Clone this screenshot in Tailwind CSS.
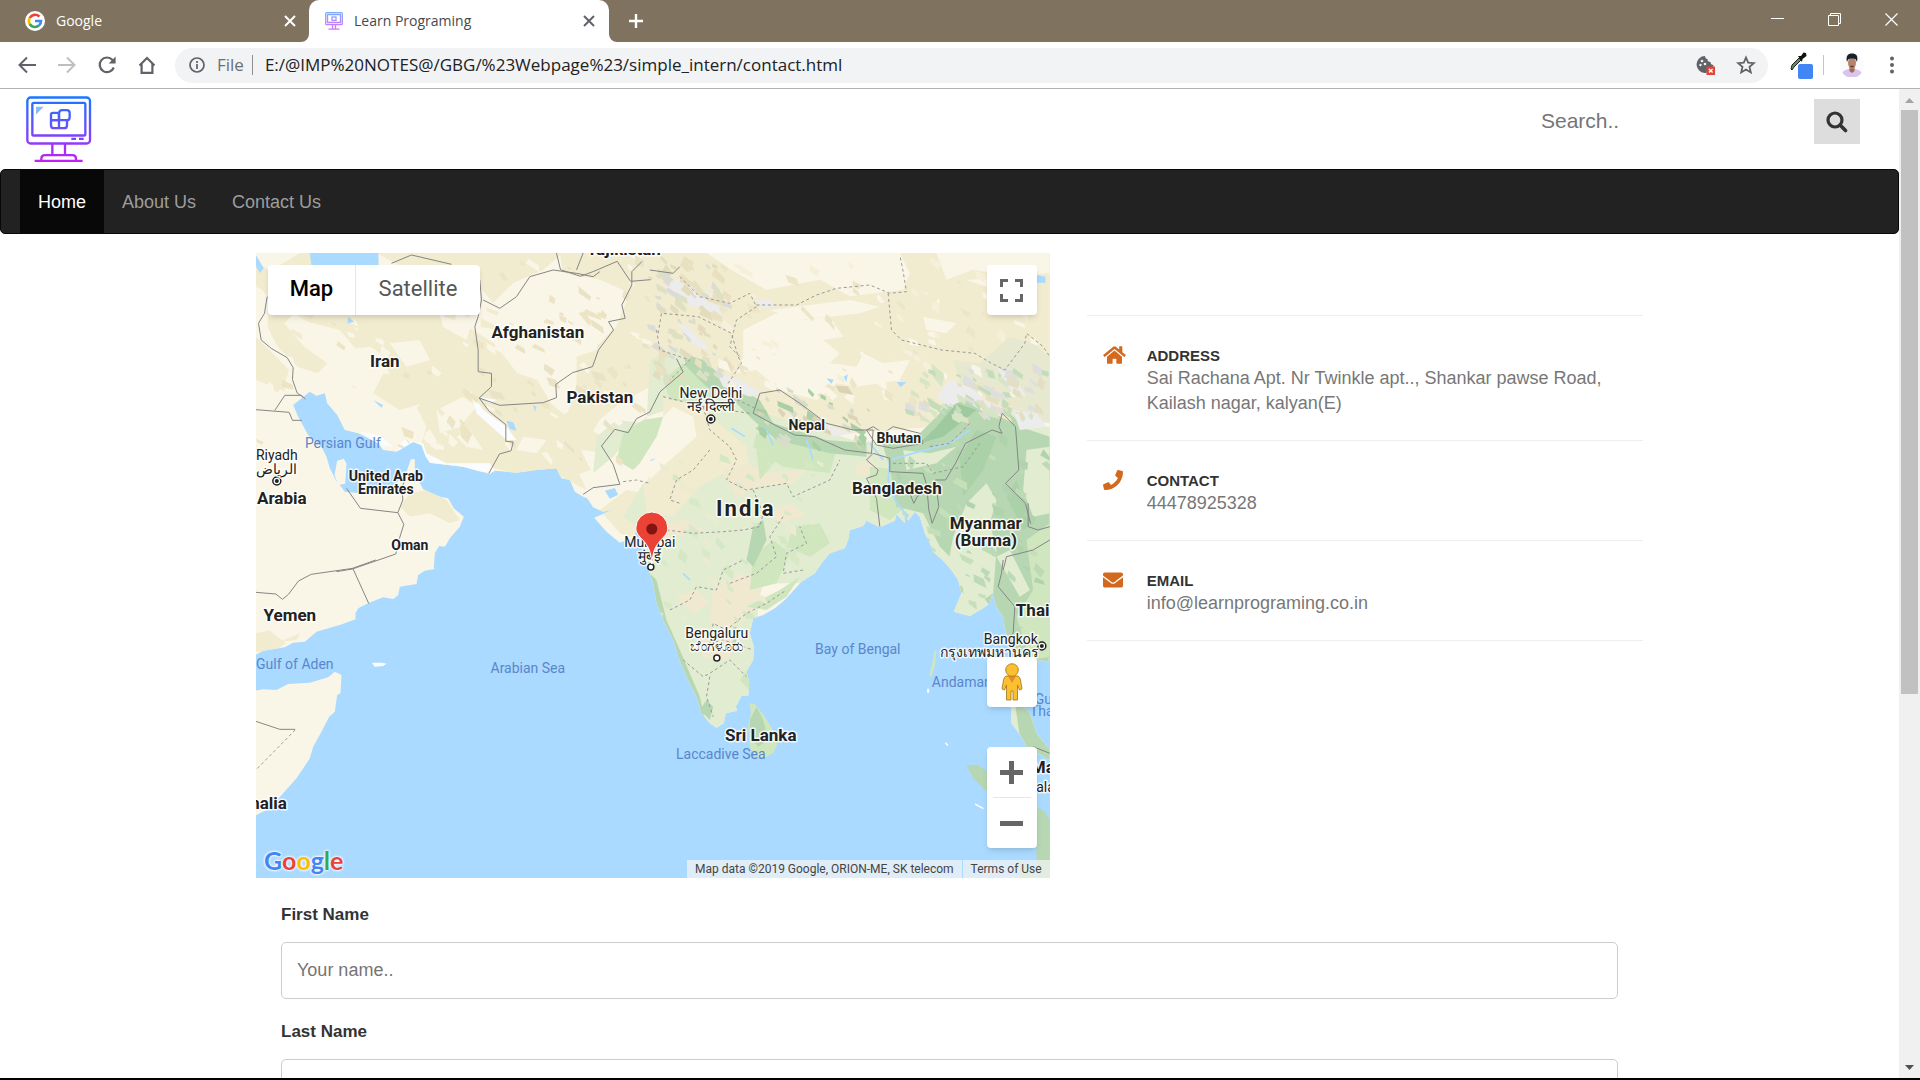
<!DOCTYPE html>
<html lang="en">
<head>
<meta charset="utf-8">
<title>Learn Programing</title>
<script src="https://cdn.jsdelivr.net/npm/@tailwindcss/browser@4"></script>
</head>
<body class="flex h-screen flex-col overflow-hidden bg-white font-['Liberation_Sans',Arial,sans-serif] text-lg text-[#333]">

<!-- Tab strip -->
<header class="flex h-[42px] shrink-0 items-center bg-[#7f735f] font-['Open_Sans','Noto_Sans',sans-serif] text-sm">
  <div class="flex w-[309px] items-center pr-[9px] pl-[25px] text-white">
    <svg class="size-5 shrink-0" viewBox="0 0 20 20"><circle cx="10" cy="10" r="10" fill="#fff"/><g fill="none" stroke-width="2.6"><path d="M14.4 5.6A6.1 6.1 0 0 0 4.7 7" stroke="#ea4335"/><path d="M4.7 7a6.2 6.2 0 0 0 0 6" stroke="#fbbc05"/><path d="M4.7 13a6.1 6.1 0 0 0 9.2 1.6" stroke="#34a853"/><path d="M13.9 14.6A6 6 0 0 0 16 10h-6" stroke="#4285f4"/></g></svg>
    <span class="ml-[11px]">Google</span>
    <button class="ml-auto grid size-5 place-items-center" aria-label="Close Google tab"><svg class="size-3" viewBox="0 0 12 12" stroke="#fff" stroke-width="2"><path d="M1 1l10 10M11 1L1 11"/></svg></button>
  </div>
  <div class="relative flex h-full w-[300px] items-center rounded-t-[10px] bg-white pr-[10px] pl-4 text-[#45494d]">
    <svg class="absolute bottom-0 -left-2 size-2" viewBox="0 0 8 8"><path d="M8 0v8H0a8 8 0 0 0 8-8z" fill="#fff"/></svg>
    <svg class="absolute -right-2 bottom-0 size-2" viewBox="0 0 8 8"><path d="M0 0v8h8a8 8 0 0 1-8-8z" fill="#fff"/></svg>
    <svg class="size-[18px] shrink-0" viewBox="0 0 18 18" fill="none" stroke-width="1.3"><defs><linearGradient id="fav" x1="0" y1="0" x2="0" y2="18" gradientUnits="userSpaceOnUse"><stop stop-color="#78aefe"/><stop offset="1" stop-color="#e26bff"/></linearGradient></defs><g stroke="url(#fav)"><rect x=".7" y=".7" width="16.6" height="12" rx="1"/><path d="M2.5 2.5h13v8h-13zM7.5 13v4M10.5 13v4M3.5 17.2h11"/><rect x="7" y="5" width="4" height="3.4"/></g></svg>
    <span class="ml-[11px]">Learn Programing</span>
    <button class="ml-auto grid size-5 place-items-center" aria-label="Close Learn Programing tab"><svg class="size-3" viewBox="0 0 12 12" stroke="#5f6368" stroke-width="2"><path d="M1 1l10 10M11 1L1 11"/></svg></button>
  </div>
  <button class="ml-4 grid size-[22px] place-items-center" aria-label="New tab"><svg class="size-4" viewBox="0 0 16 16" stroke="#fff" stroke-width="2.4"><path d="M8 1v14M1 8h14"/></svg></button>
  <div class="ml-auto flex items-center gap-11 pr-[22px] pb-1">
    <button aria-label="Minimize"><svg class="h-[13px] w-[13px]" viewBox="0 0 13 13" stroke="#fff"><path d="M0 5.5h13"/></svg></button>
    <button aria-label="Restore"><svg class="h-[13px] w-[13px]" viewBox="0 0 13 13" fill="none" stroke="#fff"><path d="M.5 2.5h10v10H.5zM2.5 2.500V.5h10v10h-2"/></svg></button>
    <button aria-label="Close"><svg class="h-[13px] w-[13px]" viewBox="0 0 13 13" stroke="#fff" stroke-width="1.200"><path d="M.5.5l12 12M12.500.5l-12 12"/></svg></button>
  </div>
</header>

<!-- Toolbar -->
<div class="flex h-[47px] shrink-0 items-center border-b border-[#b3b3b3] bg-white pr-[18px] pl-[17px] font-['Open_Sans','Noto_Sans',sans-serif] text-base">
  <div class="flex w-[158px] items-center gap-5">
    <button aria-label="Back"><svg class="size-5" viewBox="0 0 20 20" fill="none" stroke="#5f6368" stroke-width="2"><path d="M19 10H3M10 2.500L2.500 10l7.500 7.500"/></svg></button>
    <button aria-label="Forward"><svg class="size-5" viewBox="0 0 20 20" fill="none" stroke="#bdbfc1" stroke-width="2"><path d="M1 10h16M10 2.500l7.500 7.500-7.500 7.500"/></svg></button>
    <button aria-label="Reload"><svg class="size-5" viewBox="0 0 20 20" fill="none" stroke="#5f6368" stroke-width="2.200"><path d="M16.800 12.500a7.300 7.300 0 1 1-1.300-7.500l2 2"/><path d="M18.600 1.500v7h-7z" fill="#5f6368" stroke="none"/></svg></button>
    <button aria-label="Home"><svg class="size-5" viewBox="0 0 20 20" fill="none" stroke="#5f6368" stroke-width="2.200"><path d="M2.500 10.500L10 3l7.500 7.500M4.600 9v8.800h10.800V9"/></svg></button>
  </div>
  <div class="flex h-[35px] min-w-0 flex-1 items-center rounded-full bg-[#f1f3f4] pr-3 pl-[14px] text-[17px]">
    <svg class="size-4" viewBox="0 0 16 16" fill="none" stroke="#5f6368" stroke-width="1.700"><circle cx="8" cy="8" r="7"/><path d="M8 7v5M8 4v2"/></svg>
    <span class="ml-3 text-[#6b6f73]">File</span>
    <span class="ml-2 h-5 w-px bg-[#8d9094]"></span>
    <input class="ml-3 min-w-0 flex-1 bg-transparent text-[#202124] outline-none" aria-label="Address" value="E:/@IMP%20NOTES@/GBG/%23Webpage%23/simple_intern/contact.html">
    <button class="mr-5" aria-label="Cookies blocked"><svg class="size-5" viewBox="0 0 20 20"><path d="M9 1a8.500 8.500 0 1 0 8.500 9c-2 0-3-1-3-3-2 0-3.300-1-3-3C9.800 3.800 9 2.500 9 1z" fill="#5f6368"/><g fill="#f1f3f4"><circle cx="6" cy="6" r="1.300"/><circle cx="4.500" cy="10" r="1.200"/><circle cx="9" cy="9" r="1.300"/></g><path d="M10.500 11.500H19V20h-8.500z" fill="#e0453a"/><path d="M13 14l3.600 3.600M16.600 14L13 17.600" stroke="#fff" stroke-width="1.400"/></svg></button>
    <button aria-label="Bookmark this page"><svg class="size-5" viewBox="0 0 20 20" fill="none" stroke="#5f6368" stroke-width="1.800"><path d="M10 2.500l2.200 5.200 5.600.5-4.300 3.700 1.300 5.500-4.800-2.900-4.800 2.900 1.300-5.500-4.300-3.700 5.600-.5z"/></svg></button>
  </div>
  <button class="ml-5" aria-label="Colour picker"><svg class="h-[28px] w-[26px]" viewBox="0 0 26 28"><path d="M3 18l1-4 7-7 2 2-7 7-2 3z" fill="#5f8d5c" stroke="#222"/><path d="M10 5l3 0 2.500-3.500 2.500.5.500 3-4 3-.5 3z" fill="#111"/><rect x="10" y="13" width="15" height="15" rx="2" fill="#4285f4"/></svg></button>
  <span class="ml-[9px] h-5 w-px bg-[#c4c6c8]"></span>
  <svg class="ml-4 size-6" viewBox="0 0 24 24"><circle cx="12" cy="12" r="12" fill="#fbfafc"/><path d="M2.500 20c1-2.800 4-3 6-4h7c2 1 5 1.200 6 4a12 12 0 0 1-19 0z" fill="#d8c4ec"/><path d="M9.500 14h5v4L12 20l-2.500-2z" fill="#9c6b50"/><ellipse cx="12" cy="10" rx="4" ry="6" fill="#b5846a"/><path d="M7 9C5.500 3 8 .5 12 .5S18.500 2.500 17 9c-1-3-2-4-5-3.500C9 5 8 6 7 9z" fill="#172029"/><path d="M10 13.200c1-.8 3-.8 4 0-.5 1.500-3.500 1.500-4 0z" fill="#5a4035"/></svg>
  <button class="ml-[18px]" aria-label="Menu"><svg class="h-5 w-5" viewBox="0 0 20 20" fill="#5f6368"><circle cx="10" cy="3.500" r="2"/><circle cx="10" cy="10" r="2"/><circle cx="10" cy="16.500" r="2"/></svg></button>
</div>

<!-- Page viewport -->
<div class="flex min-h-0 flex-1 border-b-2 border-black">
<main class="min-w-0 flex-1 overflow-hidden">
  <div class="flex h-20 items-start justify-between pr-[39px] pl-[26px]">
    <a href="#" aria-label="Learn Programing" class="mt-[7px]"><svg class="h-[67px] w-[66px]" viewBox="0 0 198 200" fill="none" stroke-width="7"><defs><linearGradient id="lg" x1="0" y1="0" x2="0" y2="200" gradientUnits="userSpaceOnUse"><stop stop-color="#1b78ff"/><stop offset=".5" stop-color="#6a4dff"/><stop offset="1" stop-color="#c91df5"/></linearGradient></defs><g stroke="url(#lg)"><rect x="4" y="4" width="188" height="138" rx="10"/><rect x="19" y="20" width="159" height="98" rx="4"/><path d="M79 142v34M117 142v34M46 194v-6q0-11 11-11h82q11 0 11 11v6M26 194h144M136 128h14M159 128h14"/><rect x="75" y="50" width="24" height="22" rx="6"/><path d="M99 72H75v15q0 9 9 9h15zM99 72h24v15q0 9-9 9H99zM99 72V52q0-10 10-10h13q9 0 9 9v12q0 9-9 9z"/></g><path d="M30 32h23L30 55z" fill="#86bbff"/></svg></a>
    <form class="mt-[10px] flex h-[45px]">
      <input class="w-[284px] px-[11px] text-[21px] outline-none placeholder:text-[#757575]" type="text" placeholder="Search.." aria-label="Search">
      <button type="button" class="grid w-[46px] place-items-center bg-[#ddd]" aria-label="Search"><svg class="size-[22px]" viewBox="0 0 22 22" fill="none" stroke="#333" stroke-linecap="round"><circle cx="9" cy="9" r="7" stroke-width="3.200"/><path d="M14.300 14.300l5.200 5.200" stroke-width="3.600"/></svg></button>
    </form>
  </div>

  <nav class="mb-[19px] flex h-[65px] rounded-[5px] border border-[#080808] bg-[#222] px-[19px] text-[#9d9d9d]">
    <a href="#" class="flex items-center bg-[#080808] px-[18px] text-white">Home</a>
    <a href="#" class="flex items-center px-[18px]">About Us</a>
    <a href="#" class="flex items-center px-[18px]">Contact Us</a>
  </nav>

  <div class="mx-auto w-full max-w-[1387px]">
    <div class="grid grid-cols-12 gap-[37px]">
      <section class="relative col-span-7 h-[625px] overflow-hidden bg-[#aadaff] font-['Roboto',sans-serif]" aria-label="Map">
        <svg class="absolute inset-0 size-full" viewBox="0 0 794 625" preserveAspectRatio="xMidYMid slice">
          <defs>
            <clipPath id="land"><path d="M18 0H2400V1200L2395 1235 2370 1230 2320 1260 2330 1310 2320 1370 2340 1390 2360 1450 2400 1500V1530L2365 1510 2340 1510 2315 1460 2285 1420 2285 1370 2300 1330 2300 1270 2290 1180 2268 1150 2260 1100 2240 1070 2228 1030 2220 1060 2200 1075 2160 1098 2112 1085 2135 1030 2125 990 2105 960 2078 930 2050 905 2040 880 2025 850 2010 800 1995 785 1975 812 1962 780 1965 820 1940 792 1935 812 1890 832 1850 812 1840 828 1800 840 1795 870 1785 895 1740 910 1715 940 1695 970 1655 995 1605 1050 1575 1075 1540 1095 1510 1105 1500 1150 1512 1190 1510 1230 1490 1265 1498 1295 1495 1338 1475 1338 1458 1370 1462 1382 1428 1390 1422 1420 1400 1433 1380 1420 1355 1390 1340 1340 1310 1280 1285 1220 1270 1170 1245 1120 1220 1060 1210 1000 1200 970 1188 940 1190 900 1175 880 1180 850 1160 840 1150 865 1110 878 1070 845 1033 803 1092 778 1060 785 1030 772 1012 745 1000 740 975 725 960 690 935 685 920 655 860 660 800 668 735 662 720 672 640 650 540 638 528 620 515 585 490 576 440 605 400 600 385 580 325 550 285 540 262 495 232 460 225 430 200 437 180 425 130 465 145 500 175 555 215 590 230 620 240 655 258 690 285 725 330 730 390 725 440 700 470 665 483 628 495 628 495 670 520 718 570 740 595 745 612 775 642 800 630 830 600 865 585 890 568 888 555 910 552 955 555 957 525 962 505 975 500 1002 450 1010 445 1035 430 1047 400 1042 355 1060 325 1075 317 1090 317 1108 270 1125 235 1135 200 1145 165 1175 130 1178 105 1192 40 1202 0 1225V0z"/></clipPath>
          </defs>
          <g transform="translate(-6 -3) scale(.33333)">
            <!-- land masses -->
            <path d="M18 0H2400V1200L2395 1235 2370 1230 2320 1260 2330 1310 2320 1370 2340 1390 2360 1450 2400 1500V1530L2365 1510 2340 1510 2315 1460 2285 1420 2285 1370 2300 1330 2300 1270 2290 1180 2268 1150 2260 1100 2240 1070 2228 1030 2220 1060 2200 1075 2160 1098 2112 1085 2135 1030 2125 990 2105 960 2078 930 2050 905 2040 880 2025 850 2010 800 1995 785 1975 812 1962 780 1965 820 1940 792 1935 812 1890 832 1850 812 1840 828 1800 840 1795 870 1785 895 1740 910 1715 940 1695 970 1655 995 1605 1050 1575 1075 1540 1095 1510 1105 1500 1150 1512 1190 1510 1230 1490 1265 1498 1295 1495 1338 1475 1338 1458 1370 1462 1382 1428 1390 1422 1420 1400 1433 1380 1420 1355 1390 1340 1340 1310 1280 1285 1220 1270 1170 1245 1120 1220 1060 1210 1000 1200 970 1188 940 1190 900 1175 880 1180 850 1160 840 1150 865 1110 878 1070 845 1033 803 1092 778 1060 785 1030 772 1012 745 1000 740 975 725 960 690 935 685 920 655 860 660 800 668 735 662 720 672 640 650 540 638 528 620 515 585 490 576 440 605 400 600 385 580 325 550 285 540 262 495 232 460 225 430 200 437 180 425 130 465 145 500 175 555 215 590 230 620 240 655 258 690 285 725 330 730 390 725 440 700 470 665 483 628 495 628 495 670 520 718 570 740 595 745 612 775 642 800 630 830 600 865 585 890 568 888 555 910 552 955 555 957 525 962 505 975 500 1002 450 1010 445 1035 430 1047 400 1042 355 1060 325 1075 317 1090 317 1108 270 1125 235 1135 200 1145 165 1175 130 1178 105 1192 40 1202 0 1225V0z" fill="#faf6e7"/>
            <path d="M262 632l20-6 8 15-4 60-20 4-12-30z" fill="#faf6e7"/>
            <path d="M0 1325l40-7 40 2 35-18 65-4 55-16 20-17 20 10-3 55-10 5-7 50-17 15-23 45-25 45-10 35-40 60-40 45-40 45-60 30z" fill="#faf6e7"/>
            <path d="M366 1238h30l14 3-10 7-25 2z" fill="#fff"/>
            <g clip-path="url(#land)">
              <!-- Iran, Afghanistan and western Pakistan -->
              <g fill="#f1ebcf">
                <path d="M18 90l40 60-5 80 30 60 60 60 60 20 30-30-70-50-60-70 30-30 80 50 60 60 90-10 40 30 20 70 60 20 30 60 60 30 70-30 30 50-20 90 60 40 130 30 40-20 80 20 60-20-30-60 90 10-40-60-80-40-60-50-40-70-60-20-70-90-80-50-100-60-40-50-100 20-80-90-60-60-60-20z"/>
                <path d="M500 470l80-30 90 40 60 60 40 50-30 60-60 20-130-20-40-60 20-60z"/>
                <path d="M400 370l90 20 30 70-70 20-80-50zM380 9h560l-60 50-90 40-60 60-50-60-90-30-120-10z"/>
                <path d="M930 9h470v260l-110 50-80-40-80 30-60 70-30-90 60-60 40-100-90-40-110-20z"/>
                <path d="M980 320l180-60 120 40-60 100-110 60-110 90-60-30 40-100zM790 500l120 10 110-60 60 10-60 100-50 70 40 90-130-70-60-30z"/>
                <path d="M480 730l50-10 60 30 40 60-30 10-60-30-60 10-30-30zM1050 780l80-60 110 20 60 80-70 70-120-40z"/>
                <path d="M18 40l60 30-20 60-40-20zM18 260l100 100-20 60-80-30zM18 1150l40-10 50 40-30 20-60 5zM90 1175l60-25-10 20z"/>
              </g>
              <g fill="#faf6e7">
                <path d="M150 210l120 30 50 60-40 10-90-40zM420 280l90-10 30 60-70 20zM560 480l80-40 40 30-50 60-60 20zM560 160l110 40-20 70-70-40zM620 560l40-20 40 60-50-10zM820 560l70 10-30 40-60-10zM870 100l130-10 60 40-70 30-50 80-120 30z"/>
              </g>
              <!-- Tibet and the Tarim basin -->
              <path d="M1290 9H2400v500l-330 20-380 30-300-120-160-180z" fill="#f1ebcf"/>
              <g fill="#faf6e7">
                <path d="M1370 9h580l30 60-20 50-160 20-90-50-160 30-90-50zM2060 9h340v60l-120 10-110-20-80 30z"/>
                <path d="M1480 240l120-60 60 30 80-10 40 60-60 10 50 40-30 30 80 10 20-40 60 30 80-10-30 60-130 20-60-10-60 50-110-30-70-60-60 10 20-50z"/>
                <path d="M1560 180l240-30 90 20-60 20-180 20zM2020 200l100 20-30 30-60-10zM2150 90l120-10-60 30z"/>
                <path d="M1220 540l60-100 50 20 30 80-90 100-60 90-40-30zM1060 590l50-50 80-10 30 70-40 80-60 30-50-60z"/>
              </g>
              <!-- Indian plains -->
              <path d="M1200 330l80-40 100 80 130 110 300 90 300 30 80-60 210-10V1600h-310l-50-600H1200l-20-160-60-40 60-100 60-30 50-90 30-60-40-50-90 30-100 120-60 50 10-110 60-50 90 10z" fill="#e2ecd0"/>
              <path d="M1190 950h340l-20 480h-140z" fill="#e2ecd0"/>
              <path d="M1240 440l80-20 40 50 60 60 70 60 10 60-80 20-70 40-80 90-80-10-10-80 60-100z" fill="#f1ebcf"/>
              <path d="M1200 540l70-70 60 30 10 60-90 80-50 50z" fill="#faf6e7"/>
              <g fill="#f1e9cf">
                <path d="M1420 670l70-30 60 30 120-10-40 40-110 10-60 30zM1220 820l90-10 50 30-110 30zM1390 1020l80-50 70 30-20 80-80 60-60-20zM1340 1150l70-20 60 40-40 60-70-10zM1280 1040l60-20 40 40-50 30z"/>
                <path d="M1560 780l70-20 30 40-80 20zM1820 640l50-10 10 40-60 10z"/>
              </g>
              <g fill="#cfe6bf">
                <path d="M1240 390l60-50 80 50 40 40-50 30-110-10zM1180 510l60-10-20 60-50 80-20 20-50-30 20-80zM1520 550l140 40 100 10-20 70-140-20-90-60zM1860 650l90 10 30 100-60 50-60-30z"/>
                <path d="M1510 920l60-50 50 40-40 90-80 20zM1630 830l80-10 30 60-60 40-70-30zM1590 1020l60-40-40 60-60 40-60-10zM1520 600l60 30-50 60zM1470 1290l28-40v70z"/>
              </g>
              <!-- forested ranges -->
              <g fill="#b7d7b3">
                <path d="M1300 310l60 20 80 70 90 50 40 70 160 50 120 10v40l-110-10-160-40-70-60-60-60-80-40-60-60z"/>
                <path d="M1900 570l110-20 60-60 40-70 60 30 60 40 80 40 90 30V1600h-70l-60-420-40-100-100-130-60-60-50-100-80-20-20-120-20-60z"/>
                <path d="M1190 960l30 30 30 120 40 90 60 140 20 90-40-20-50-70-60-150-60-140zM1510 830l30-20 10 60-40 80-20-20zM1370 1350l20 20-10 40-30-30z"/>
                <path d="M1450 1130l10 0 0 60-10-10zM2270 470l60 80 70 60v80l-80-80z"/>
              </g>
              <path d="M2060 530l60-70 60 20-100 80-70 20z" fill="#9fca9f"/>
              <path d="M2130 620l50-80 60 20-40 100-60 80zM2270 740l30-50 50 130-30 20z" fill="#abd1a9"/>
              <g fill="#e2ecd0">
                <path d="M2150 760l60-60 30 50-20 70 20 80-10 130-30 20-40-60-20 60-40 30-20-60 30-160zM2240 920l40-20 60 120-30 20zM2330 600l70-10v200l-50 10-30-80zM1960 600l80 10 80-20-60 50-90 20z"/>
                <path d="M2330 870l70-50v400l-60 10-40-130 50-80z" fill="#cfe6bf"/>
              </g>
              <!-- upper Mekong -->
              <path d="M2110 330l80 10 90-80 70 20 50 40v200l-110-20-60-60-90-10z" fill="#e6e9cf"/>
              <!-- snow -->
              <g fill="#ececec">
                <path d="M1240 100l60-15 40 35 50 10 35 90-60-40-60-20-50-30zM1285 220l30 10 60 60-10 10-40-20zM1400 370l70 20 70 40-40 10-80-30zM1720 520l50 20 40 10-60 10zM2060 440l40-50 60 20 70 60-20 20-70-40-40 20zM2240 350l60 40 30 50-40-10zM1520 150l40 0 20 20-50 0zM2290 480l70 10 30 40-80 10z"/>
                <path d="M440 600l20-30 60 10 10 30 60 30 130 0 15 25-110 0-90-20zM660 420l40 60 70 50 30 40-30 0-90-80zM690 440l50 10-20 10zM330 545l60 10 40 35-40-5z" fill="#fafcfd"/>
              </g>
              <g id="shards"></g>
            </g>
            <!-- gulfs and lakes -->
            <g fill="#aadaff">
              <path d="M180 9h206v40H185zM18 15l24 40-12 14-12-20zM295 200l18 15-20 5zM770 512l20 5 10 25-20-5zM1065 722l30-8 10 20-25 12zM2360 75l27 5v18h-27zM1940 395l30 2-18 14zM1730 385l22 4-8 12z"/>
              <path d="M370 450l30 15-5 8zM1782 380l12-8-4 24zM1200 630l20-5-15 8zM850 465l10 5-5 15z"/>
            </g>
            <!-- rivers -->
            <g fill="none" stroke="#aadaff" stroke-width="5">
              <path d="M2160 540l-60 40-110 30-70 20-5 60 20 60 40 50M1860 580l40 50M1670 570l20 60M1550 540l20 45M1445 535l40 25M1300 970l20 20"/>
            </g>
            <!-- islands -->
            <path d="M1500 1360l15 2 30 38 30 50 7 35-12 25-25 12-30-2-15-30-5-60 8-40z" fill="#cfe6bf"/>
            <path d="M1500 1410l20-40 20 40 15 60-30 20-25-30z" fill="#b7d7b3"/>
            <path d="M2150 1545h35l35 25 50 60v20l-65-30-35-35zM2360 1670l25 15 15 25v180h-90l-10-60 20 5 40 50z" fill="#b7d7b3"/>
            <path d="M2055 1200l5 0-5 50-12 30-5-3 10-40z" fill="#cfe6bf"/>
            <path d="M2032 1316l6 0 0 12-6 0zM2088 1476l8 10-2 3-8-8zM2176 1660l26 14-2 4-24-13z" fill="#fff"/>
            <!-- national borders -->
            <g fill="none" stroke="#858585" stroke-width="3" stroke-linejoin="round">
              <path d="M52 140l-8 50-18 30 8 50 30 25 48 28 18 30-2 36 14 40 20 14M18 479l100 8 10 24h28M75 481l30-45 50 0 12 12M290 715l42 60 112 13 15-38-2-40 15-38M444 788l18 35-14 45-10 44-130 45-48 8"/>
              <path d="M690 90l5 60-10 50-10 30 10 70 0 65 40 5 0 40-37 34 62 22 130-8 40-15-2-40 50-35 60-18 18-50 45-60-15-25 50-10-10-40 30-60 0-40 30-30"/>
              <path d="M688 444l30 40 50 40 0 50 22 2-6 26-35 10-32 58M1200 486l-40 20-25 42-40-10-40 50 35 55 20 60-80 10-30 20M700 150l50 25 50-35 40-60 70-20 70 10 50 10 20-15M425 40l60-25 120 28M980 60l20-51M920 9l12 50 60 20 40-15 70-30 40 60 60-5M1200 60l70 10 20-20M1200 486l30-60 70-60-20-40"/>
              <path d="M1510 490l20-60 60-10 60 40 80 60 80 20 60 0-5 70-80-10-90-40-60-5-60-30zM1850 540l20-10 30 20 30-20 80 20 10 30-90 15-50-10zM1870 610l-20 20 35 30-5 15-30 10 30 60 10 85M1870 610l50 15 0 40 100 5 12 40-30 20-30-20 20 50 10-20 30-20 5 60 10 40 20-50-10-80 30 0 30-50 30-60 80-40 30 10-10-20 10-40 40 40 10 130-40 40 60 60 15 60"/>
              <path d="M2335 760l0 70 30 10 35-10M2260 960l10-40 80-20 50-30M2260 930l-5 40-10 40 50 60-5 80-10 10 15 60M2350 1490l50 20M18 1027l60 5 20 16 18-15 30-40 38-20 125-18 48 106M308 955l70-25M18 1414l72 24h46"/>
            </g>
            <g fill="none" stroke="#999" stroke-width="3" stroke-dasharray="9 8">
              <path d="M136 1440L18 1560M1120 695l40-5 40 10M1220 240l10 60 90 30-60 60M1225 250l10-60 110 10 100 50 20 70 10 20-40 60 10 40 80 40M1290 80l60 60 90 20 60-30 20 40-60 40-20 80 30 30M1520 165l120 0 60-30 60-20 100-10 60 25 50-5-10-60-10-50M1915 130l10 110 30 30 120 30 100 10 50 30 40 20 60-80 5-30 50 40 20 30 60 20M2040 590l60-10 60-60M1930 640l100 0 20 30 90-20 50-70"/>
              <path d="M1240 440l120 30 140 20M1360 470l20 70 60 50 20 40-30 60 60 30 120-20 20 40 110-50 30-60M1380 600l-50 60-50 30-20 60 30 10M1250 840l80 10 90-5 60-5 50-10 10-40-30-70M1600 800l-40 60 20 60-60 50-80 30M1260 1080l60-30 20-40 60 10 20-60 60-30M1380 1180l40-10 60 20 30 10M1380 1180l10-60 40 20 60-50 60-30 60-40M1300 1230l60 50 20-10 60-40 50 50M1380 1280l-10 60 20 60M1660 960l-60 10 10-60 60-30-20-50"/>
            </g>
          </g>

          <!-- place markers -->
          <g fill="#fff" stroke="#222" stroke-width="1.500">
            <circle cx="21" cy="228" r="4"/><circle cx="455" cy="166" r="4"/><circle cx="786" cy="393" r="4"/><circle cx="461" cy="405" r="3"/><circle cx="395" cy="314" r="3"/>
          </g>
          <g fill="#222"><circle cx="21" cy="228" r="2"/><circle cx="455" cy="166" r="2"/><circle cx="786" cy="393" r="2"/></g>

          <g class="text-sm" fill="#5a86cc" text-anchor="middle">
            <text x="87" y="195">Persian Gulf</text><text x="39" y="416">Gulf of Aden</text><text x="272" y="420">Arabian Sea</text><text x="602" y="401">Bay of Bengal</text><text x="465" y="506">Laccadive Sea</text>
            <text x="676" y="434" text-anchor="start">Andaman Sea</text><text x="779" y="451" text-anchor="start">Gulf of</text><text x="774" y="463" text-anchor="start">Thailand</text>
          </g>
          <g fill="#222" stroke="#fff" stroke-width="3" stroke-opacity=".8" stroke-linejoin="round" paint-order="stroke" text-anchor="middle">
            <g class="text-[17px] font-bold">
              <text x="368" y="2">Tajikistan</text><text x="282" y="85">Afghanistan</text><text x="129" y="114">Iran</text><text x="344" y="150">Pakistan</text><text x="26" y="251">Arabia</text><text x="34" y="368">Yemen</text><text x="31" y="556" text-anchor="end">Somalia</text><text x="641" y="241">Bangladesh</text><text x="730" y="276">Myanmar</text><text x="730" y="293">(Burma)</text><text x="505" y="488">Sri Lanka</text><text x="760" y="363" text-anchor="start">Thailand</text><text x="775" y="520" text-anchor="start">Malaysia</text>
            </g>
            <text x="490" y="263" class="text-[22px] font-bold tracking-widest">India</text>
            <g class="text-sm font-bold"><text x="130" y="228">United Arab</text><text x="130" y="241">Emirates</text><text x="154" y="297">Oman</text><text x="551" y="177">Nepal</text><text x="643" y="190">Bhutan</text></g>
            <g class="text-sm"><text x="21" y="207">Riyadh</text><text x="21" y="221">الرياض</text><text x="455" y="145">New Delhi</text><text x="455" y="158">नई दिल्ली</text><text x="394" y="294">Mumbai</text><text x="394" y="308">मुंबई</text><text x="461" y="385">Bengaluru</text><text x="461" y="398">ಬೆಂಗಳೂರು</text><text x="755" y="391">Bangkok</text><text x="734" y="404">กรุงเทพมหานคร</text><text x="764" y="539" text-anchor="start">Kuala Lumpur</text></g>
          </g>
          <path d="M396 311c-1-14-4-18-9-24-4-4-7-7-7-12a16 16 0 0 1 32 0c0 5-3 8-7 12-5 6-8 10-9 24z" fill="#ea4335" stroke="#fff" stroke-width="1"/>
          <circle cx="396" cy="276" r="5.500" fill="#811411"/>
        </svg>

        <div class="absolute top-3 left-3 flex h-[50px] items-center rounded-sm bg-white text-[22px] shadow-md">
          <button class="h-full w-[88px] border-r border-[#e6e6e6] pb-0.5 font-medium text-black">Map</button>
          <button class="h-full w-[124px] pb-0.5 text-[#565656]">Satellite</button>
        </div>
        <button class="absolute top-3 right-[13px] grid size-[50px] place-items-center rounded-sm bg-white shadow-md" aria-label="Toggle fullscreen"><svg class="size-[23px]" viewBox="0 0 23 23" fill="none" stroke="#666" stroke-width="3"><path d="M1.500 8V1.500H8M15 1.500h6.500V8M21.500 15v6.500H15M8 21.500H1.500V15"/></svg></button>
        <button class="absolute right-[13px] bottom-[171px] grid size-[50px] place-items-center rounded-sm bg-white shadow-md" aria-label="Street View"><svg class="h-[38px] w-[22px]" viewBox="0 0 22 38" fill="#fcbf2d" stroke="#9c7420" stroke-width=".8"><path d="M5 13h12q2 1 2.500 4l1.500 9-2.500 1-2-5v15h-4.500v-9h-2v9H5.500V22l-2 5L1 26l1.500-9Q3 14 5 13z"/><path d="M7 13h8l-4 7z" fill="#e58a2e" stroke="none"/><circle cx="11" cy="7" r="6.300"/></svg></button>
        <div class="absolute right-[13px] bottom-[30px] flex w-[50px] flex-col items-center rounded-sm bg-white shadow-md">
          <button class="grid h-[50px] w-full place-items-center" aria-label="Zoom in"><svg class="size-[23px]" viewBox="0 0 23 23" stroke="#666" stroke-width="5"><path d="M0 11.500h23M11.500 0v23"/></svg></button>
          <span class="h-px w-[38px] bg-[#e6e6e6]"></span>
          <button class="grid h-[50px] w-full place-items-center" aria-label="Zoom out"><svg class="size-[23px]" viewBox="0 0 23 23" stroke="#666" stroke-width="5"><path d="M0 11.500h23"/></svg></button>
        </div>
        <a href="#" aria-label="Google" class="absolute bottom-0.5 left-2 font-['Lato',sans-serif] text-[25px] leading-8 font-bold [text-shadow:0_0_2px_#fff,0_0_3px_#fff,0_0_3px_#fff]"><span class="text-[#4285f4]">G</span><span class="text-[#ea4335]">o</span><span class="text-[#fbbc05]">o</span><span class="text-[#4285f4]">g</span><span class="text-[#34a853]">l</span><span class="text-[#ea4335]">e</span></a>
        <div class="absolute right-0 bottom-0 flex h-[18px] items-center gap-px text-xs leading-[18px] text-[#444]">
          <span class="bg-[#f5f5f5]/70 px-2">Map data ©2019 Google, ORION-ME, SK telecom</span>
          <a href="#" class="bg-[#f5f5f5]/70 px-2">Terms of Use</a>
        </div>
      </section>

      <section class="col-span-5 pt-[62px]">
        <ul class="divide-y divide-[#eee] border-y border-[#eee] text-[#777]">
          <li class="flex pt-[29px] pb-6 pl-4">
            <svg class="h-5 w-[23px] shrink-0" viewBox="0 0 576 512" fill="#d2691e"><path d="M280.370 148.260L96 300.110V464a16 16 0 0 0 16 16l112.060-.29a16 16 0 0 0 15.920-16V368a16 16 0 0 1 16-16h64a16 16 0 0 1 16 16v95.640a16 16 0 0 0 16 16.050L464 480a16 16 0 0 0 16-16V300L295.670 148.260a12.190 12.190 0 0 0-15.300 0zM571.600 251.470L488 182.560V44.050a12 12 0 0 0-12-12h-56a12 12 0 0 0-12 12v72.610L318.470 43a48 48 0 0 0-61 0L4.340 251.470a12 12 0 0 0-1.600 16.900l25.500 31A12 12 0 0 0 45.150 301l235.220-193.740a12.190 12.190 0 0 1 15.300 0L530.900 301a12 12 0 0 0 16.900-1.600l25.500-31a12 12 0 0 0-1.700-16.930z"/></svg>
            <div class="ml-[21px]"><h4 class="text-[15px] leading-[21px] font-bold text-[#333]">ADDRESS</h4><p class="leading-[25px]">Sai Rachana Apt. Nr Twinkle apt.., Shankar pawse Road,<br>Kailash nagar, kalyan(E)</p></div>
          </li>
          <li class="flex pt-[29px] pb-6 pl-4">
            <svg class="h-5 w-5 shrink-0" viewBox="0 0 512 512" fill="#d2691e"><path d="M493.400 24.600l-104-24c-11.300-2.600-22.900 3.300-27.500 13.900l-48 112c-4.200 9.800-1.400 21.300 6.900 28l60.600 49.600c-36 76.700-98.900 140.500-177.200 177.200l-49.600-60.600c-6.800-8.300-18.200-11.100-28-6.900l-112 48C3.900 366.500-2 378.100.6 389.400l24 104C27.100 504.200 36.700 512 48 512c256.100 0 464-207.500 464-464 0-11.200-7.700-20.900-18.600-23.400z"/></svg>
            <div class="ml-6"><h4 class="text-[15px] leading-[21px] font-bold text-[#333]">CONTACT</h4><p class="leading-[25px]">44478925328</p></div>
          </li>
          <li class="flex pt-[29px] pb-6 pl-4">
            <svg class="h-5 w-5 shrink-0" viewBox="0 0 512 512" fill="#d2691e"><path d="M502.300 190.800c3.900-3.100 9.700-.2 9.700 4.700V400c0 26.500-21.500 48-48 48H48c-26.500 0-48-21.500-48-48V195.600c0-5 5.700-7.800 9.700-4.700 22.400 17.400 52.100 39.500 154.100 113.600 21.100 15.400 56.700 47.800 92.200 47.600 35.700.3 72-32.800 92.300-47.600 102-74.100 131.600-96.300 154-113.700zM256 320c23.200.4 56.600-29.200 73.400-41.400 132.700-96.300 142.800-104.700 173.400-128.700 5.800-4.500 9.200-11.500 9.200-18.900v-19c0-26.500-21.500-48-48-48H48c-26.500 0-48 21.500-48 48v19c0 7.400 3.400 14.300 9.200 18.900 30.600 23.900 40.700 32.400 173.400 128.700 16.800 12.200 50.200 41.800 73.400 41.400z"/></svg>
            <div class="ml-6"><h4 class="text-[15px] leading-[21px] font-bold text-[#333]">EMAIL</h4><p class="leading-[25px]">info@learnprograming.co.in</p></div>
          </li>
        </ul>
      </section>
    </div>

    <form class="px-[25px] pt-6">
      <label for="fname" class="mb-[14px] block text-[17px] leading-[26px] font-bold">First Name</label>
      <input id="fname" type="text" placeholder="Your name.." class="mb-5 block h-[57px] w-full rounded-[5px] border border-[#ccc] px-[15px] placeholder:text-[#757575]">
      <label for="lname" class="mb-[14px] block text-[17px] leading-[26px] font-bold">Last Name</label>
      <input id="lname" type="text" placeholder="Your last name.." class="mb-5 block h-[57px] w-full rounded-[5px] border border-[#ccc] px-[15px] placeholder:text-[#757575]">
    </form>
  </div>
</main>

<!-- Scrollbar -->
<div class="flex w-[21px] shrink-0 flex-col items-center bg-[#f0f0f0]">
  <svg class="h-[21px] w-[21px] shrink-0" viewBox="0 0 21 21" fill="#a3a3a3"><path d="M6 14l4.500-5 4.500 5z"/></svg>
  <div class="h-[59%] w-[17px] bg-[#c1c1c1]"></div>
  <svg class="mt-auto h-[21px] w-[21px] shrink-0" viewBox="0 0 21 21" fill="#505050"><path d="M6 8h9l-4.500 5z"/></svg>
</div>
</div>

<script>
  // Small relief facets scattered over the land, from a fixed seed.
  let seed = 7;
  const rnd = () => (seed = (seed * 16807) % 2147483647) / 2147483647;
  const zones = [
    [30, 60, 700, 560, 90, ['#ece4c4', '#faf6e7', '#f1ebcf']],
    [720, 20, 480, 620, 80, ['#ece4c4', '#faf6e7', '#e9e2c6']],
    [1200, 20, 240, 380, 80, ['#e3dbbd', '#dcdcd6', '#dde0c2', '#e9e0c0']],
    [1400, 40, 960, 420, 90, ['#faf6e7', '#ece5c8', '#f6f0da']],
    [1230, 620, 500, 560, 60, ['#d5e8c4', '#d9e9c8', '#ecebd0']],
    [1520, 420, 340, 170, 40, ['#a9cfa6', '#d8dccb', '#dcd3b4']],
    [1980, 360, 410, 150, 80, ['#dedede', '#c3dcb9', '#e4dec2', '#d5e5c6']],
    [1940, 560, 460, 600, 70, ['#b0d3ad', '#c5e0b9', '#bcdab5']]
  ];
  document.getElementById('shards').innerHTML = zones.map(([x, y, w, h, n, colours]) =>
    Array.from({ length: n }, (_, i) => {
      const cx = x + rnd() * w, cy = y + rnd() * h, r = 6 + rnd() * 18, tilt = .4 + rnd() * .6;
      const pts = [0, 1, 2, 3].map(k => {
        const a = k * 1.57 + rnd();
        const px = Math.cos(a) * r * 1.3, py = Math.sin(a) * r * .6;
        return `${(cx + px * Math.cos(tilt) - py * Math.sin(tilt)).toFixed(0)} ${(cy + px * Math.sin(tilt) + py * Math.cos(tilt)).toFixed(0)}`;
      });
      return `<path d="M${pts.join('L')}z" fill="${colours[i % colours.length]}"/>`;
    }).join('')).join('');
</script>
</body>
</html>
